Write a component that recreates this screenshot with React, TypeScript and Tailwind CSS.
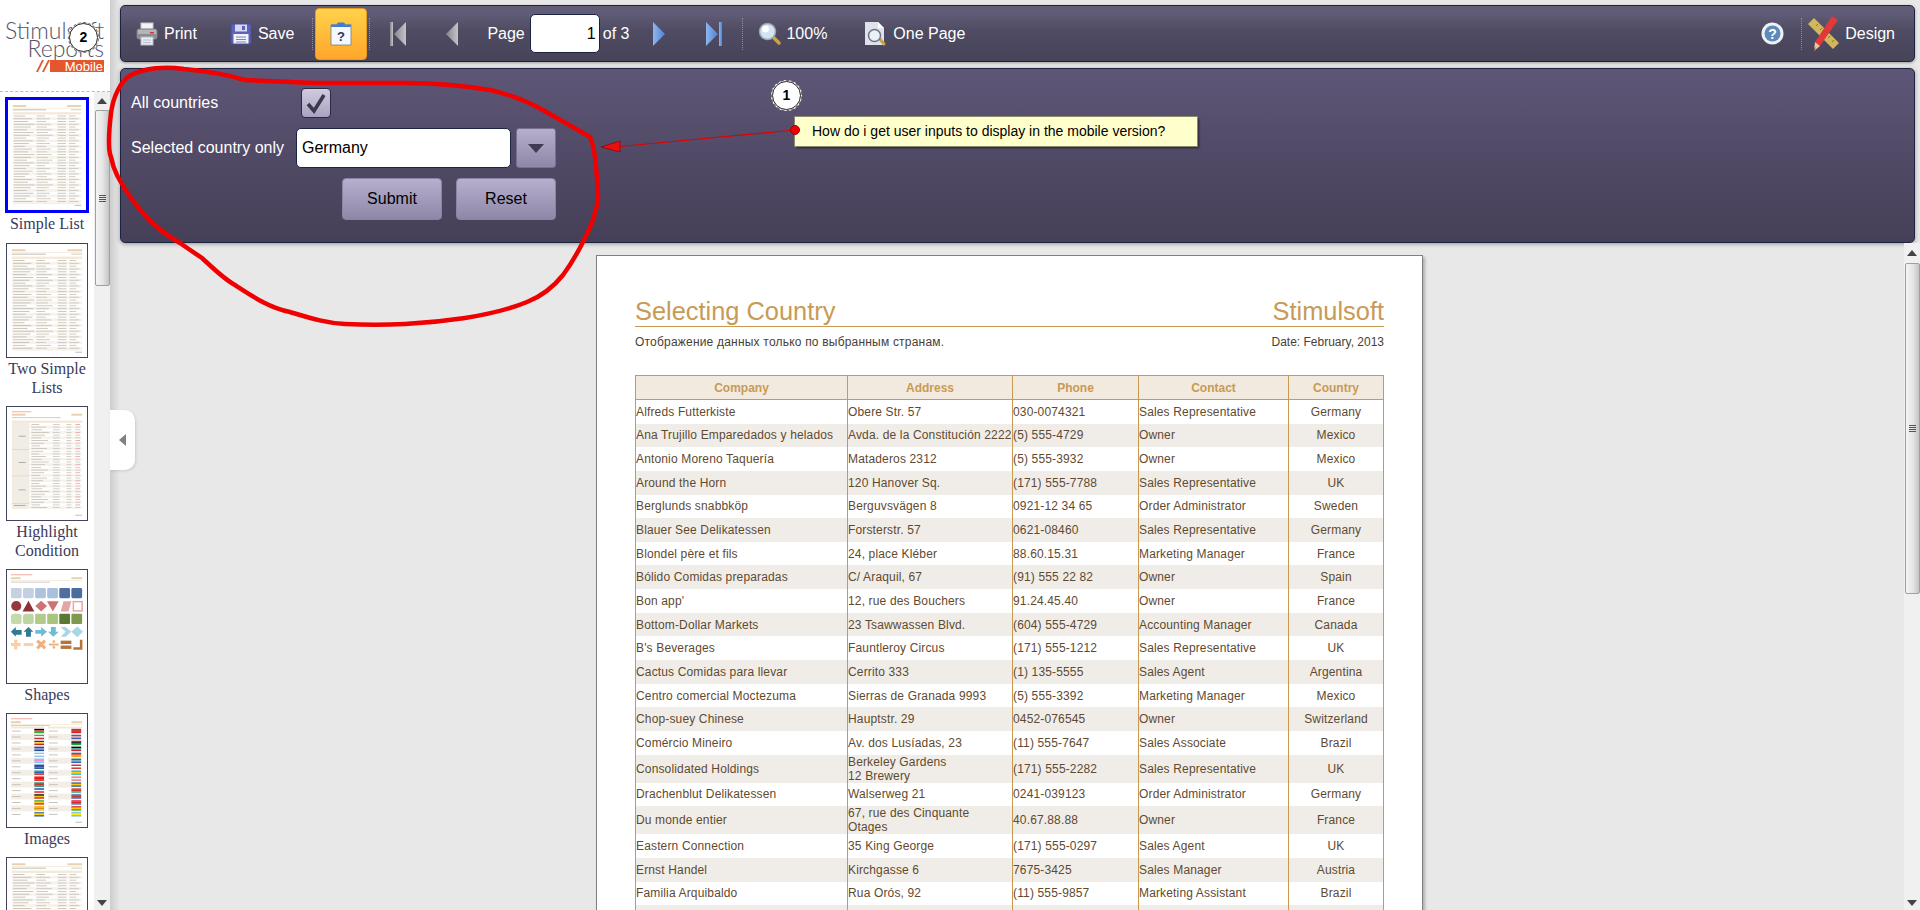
import React from 'react'

const SANS = "font-['Liberation_Sans',Arial,sans-serif]"

// ---- report data ----

const ROWS: string[][] = [
  ['Alfreds Futterkiste', 'Obere Str. 57', '030-0074321', 'Sales Representative', 'Germany'],
  ['Ana Trujillo Emparedados y helados', 'Avda. de la Constitución 2222', '(5) 555-4729', 'Owner', 'Mexico'],
  ['Antonio Moreno Taquería', 'Mataderos 2312', '(5) 555-3932', 'Owner', 'Mexico'],
  ['Around the Horn', '120 Hanover Sq.', '(171) 555-7788', 'Sales Representative', 'UK'],
  ['Berglunds snabbköp', 'Berguvsvägen 8', '0921-12 34 65', 'Order Administrator', 'Sweden'],
  ['Blauer See Delikatessen', 'Forsterstr. 57', '0621-08460', 'Sales Representative', 'Germany'],
  ['Blondel père et fils', '24, place Kléber', '88.60.15.31', 'Marketing Manager', 'France'],
  ['Bólido Comidas preparadas', 'C/ Araquil, 67', '(91) 555 22 82', 'Owner', 'Spain'],
  ["Bon app'", '12, rue des Bouchers', '91.24.45.40', 'Owner', 'France'],
  ['Bottom-Dollar Markets', '23 Tsawwassen Blvd.', '(604) 555-4729', 'Accounting Manager', 'Canada'],
  ["B's Beverages", 'Fauntleroy Circus', '(171) 555-1212', 'Sales Representative', 'UK'],
  ['Cactus Comidas para llevar', 'Cerrito 333', '(1) 135-5555', 'Sales Agent', 'Argentina'],
  ['Centro comercial Moctezuma', 'Sierras de Granada 9993', '(5) 555-3392', 'Marketing Manager', 'Mexico'],
  ['Chop-suey Chinese', 'Hauptstr. 29', '0452-076545', 'Owner', 'Switzerland'],
  ['Comércio Mineiro', 'Av. dos Lusíadas, 23', '(11) 555-7647', 'Sales Associate', 'Brazil'],
  ['Consolidated Holdings', 'Berkeley Gardens\n12 Brewery', '(171) 555-2282', 'Sales Representative', 'UK'],
  ['Drachenblut Delikatessen', 'Walserweg 21', '0241-039123', 'Order Administrator', 'Germany'],
  ['Du monde entier', '67, rue des Cinquante\nOtages', '40.67.88.88', 'Owner', 'France'],
  ['Eastern Connection', '35 King George', '(171) 555-0297', 'Sales Agent', 'UK'],
  ['Ernst Handel', 'Kirchgasse 6', '7675-3425', 'Sales Manager', 'Austria'],
  ['Familia Arquibaldo', 'Rua Orós, 92', '(11) 555-9857', 'Marketing Assistant', 'Brazil'],
  ['', '', '', '', ''],
]

const HEADERS = ['Company', 'Address', 'Phone', 'Contact', 'Country']

// ---- sidebar thumbnails ----

function ListThumb() {
  const rows = Array.from({ length: 32 }, (_, i) => i)
  return (
    <svg viewBox="0 0 82 115" className="h-full w-full blur-[0.4px]">
      <rect x="5" y="5" width="14" height="2" fill="#e8d2ae" />
      <rect x="62" y="5" width="15" height="2" fill="#e8d2ae" />
      <rect x="5" y="8" width="72" height="0.5" fill="#ecdcc2" />
      <rect x="5" y="9.5" width="35" height="1" fill="#bbb" />
      <rect x="66" y="9.5" width="11" height="1" fill="#ccc" />
      <rect x="5" y="12.5" width="72" height="2.4" fill="#f3e9da" />
      {rows.map((i) => (
        <g key={i}>
          {i % 2 === 1 && <rect x="5" y={15 + i * 2.9} width="72" height="2.9" fill="#f6f2ec" />}
          <rect x="6" y={16 + i * 2.9} width={12 + ((i * 7) % 11)} height="1" fill="#c9c3b7" />
          <rect x="30" y={16 + i * 2.9} width={9 + ((i * 5) % 9)} height="1" fill="#cfc9be" />
          <rect x="52" y={16 + i * 2.9} width="9" height="1" fill="#ccc6bb" />
          <rect x="64" y={16 + i * 2.9} width={7 + ((i * 3) % 6)} height="1" fill="#cfc9be" />
        </g>
      ))}
      <rect x="5" y="108" width="72" height="0.5" fill="#ecdcc2" />
      <rect x="70" y="110" width="7" height="1" fill="#bbb" />
    </svg>
  )
}

function HighlightThumb() {
  const rows = Array.from({ length: 32 }, (_, i) => i)
  return (
    <svg viewBox="0 0 82 115" className="h-full w-full blur-[0.4px]">
      <rect x="5" y="4" width="20" height="1" fill="#f0a9a0" />
      <rect x="5" y="6.5" width="14" height="2" fill="#e8d2ae" />
      <rect x="66" y="6.5" width="11" height="2" fill="#e8d2ae" />
      <rect x="5" y="10" width="50" height="1" fill="#ccc" />
      <rect x="5" y="13.5" width="72" height="2.4" fill="#f3e9da" />
      <rect x="5" y="16" width="18" height="88" fill="#f2ede4" />
      <rect x="5" y="43" width="18" height="0.5" fill="#d9c6a6" />
      <rect x="5" y="70" width="18" height="0.5" fill="#d9c6a6" />
      <rect x="5" y="98" width="18" height="0.5" fill="#d9c6a6" />
      <rect x="12" y="29" width="7" height="1" fill="#aaa" />
      <rect x="12" y="56" width="7" height="1" fill="#aaa" />
      <rect x="12" y="84" width="7" height="1" fill="#aaa" />
      <rect x="7" y="100" width="12" height="1" fill="#aaa" />
      {rows.map((i) => (
        <g key={i}>
          {i % 2 === 1 && <rect x="23" y={16 + i * 2.75} width="54" height="2.75" fill="#f6f3ed" />}
          <rect x="25" y={17 + i * 2.75} width={8 + ((i * 7) % 11)} height="0.9" fill="#c9c3b7" />
          <rect x="47" y={17 + i * 2.75} width={7 + ((i * 5) % 5)} height="0.9" fill="#cfc9be" />
          <rect x="61" y={17 + i * 2.75} width="5" height="0.9" fill="#cfc9be" />
          <rect x="70" y={17 + i * 2.75} width="5" height="0.9" fill={i % 3 === 0 ? '#eea6a6' : '#cfc9be'} />
        </g>
      ))}
      <rect x="70" y="110" width="7" height="1" fill="#bbb" />
    </svg>
  )
}

function ShapesThumb() {
  const blues = ['#c5d0e0', '#c2d0e2', '#aec2dc', '#a8c0dc', '#4e6f9f', '#4a6d9e']
  const greens = ['#c6d9ab', '#bdd5a6', '#b2cb8a', '#a9c47c', '#5a7a34', '#7f9a4f']
  return (
    <svg viewBox="0 0 82 115" className="h-full w-full blur-[0.25px]">
      <rect x="4" y="4" width="22" height="1" fill="#f0a9a0" />
      <rect x="4" y="7" width="10" height="2" fill="#e8d2ae" />
      <rect x="66" y="7" width="11" height="2" fill="#e8d2ae" />
      <rect x="4" y="10" width="73" height="0.5" fill="#ecdcc2" />
      <rect x="4" y="11.5" width="40" height="1" fill="#ccc" />
      {blues.map((c, i) => (
        <rect key={c + i} x={4 + i * 12.4} y="18" width="11" height="10.5" rx="1.5" fill={c} />
      ))}
      <circle cx="9.5" cy="36.5" r="5.2" fill="#943a3c" />
      <polygon points="16,42 28,42 22,31" fill="#8c3236" />
      <polygon points="35,31 41,36.5 35,42 29,36.5" fill="#cc7377" />
      <polygon points="41,31.5 53,31.5 47,42" fill="#cc7377" />
      <polygon points="55,42 58,31.5 66,31.5 63,42" fill="#e3a5a7" />
      <rect x="68" y="32" width="9" height="9.5" fill="#fff" stroke="#e3a5a7" strokeWidth="1.5" />
      {greens.map((c, i) => (
        <rect key={c + i} x={4 + i * 12.4} y="44.5" width="11" height="10.5" rx={i < 2 ? 3 : 1} fill={c} />
      ))}
      <polygon points="4,63 9,58 9,61 15,61 15,66 9,66 9,68 4,63" fill="#2f7a94" />
      <polygon points="22,58 27,63 24.5,63 24.5,68 19.5,68 19.5,63 17,63" fill="#2f7a94" />
      <polygon points="29,61 35,61 35,58 41,63 35,68 35,65 29,65" fill="#6fbcd8" />
      <polygon points="45,58 50,58 50,63 53,63 47.5,68 42,63 45,63" fill="#6fbcd8" />
      <polygon points="55,58 60,58 66,63 60,68 55,68 60,63" fill="#a7d6e6" />
      <polygon points="72,57.5 78,63 72,68.5 66,63" fill="#a7d6e6" />
      <path d="M9 71v10M4 76h10" stroke="#f9cfa6" strokeWidth="3.2" />
      <rect x="17" y="74.5" width="10" height="3" fill="#f9cfa6" />
      <path d="M31 72l8 8M39 72l-8 8" stroke="#f2b07a" strokeWidth="3.2" />
      <path d="M43 76h10" stroke="#f2b07a" strokeWidth="2" />
      <circle cx="48" cy="73" r="1.4" fill="#f2b07a" />
      <circle cx="48" cy="79" r="1.4" fill="#f2b07a" />
      <rect x="55" y="72" width="11" height="3.5" fill="#b5753a" />
      <rect x="55" y="77" width="11" height="3.5" fill="#b5753a" />
      <path d="M76 71v9h-8" stroke="#b5753a" strokeWidth="2.6" fill="none" />
    </svg>
  )
}

const FLAGS = [
  ['#000', '#c33', '#3a3'], ['#3a7', '#fff', '#c33'], ['#13a', '#fc0', '#c22'], ['#2a4a9a', '#7a92c8', '#2a4a9a'],
  ['#8cc4ee', '#fff', '#8cc4ee'], ['#8cc4ee', '#e8d', '#8cc4ee'], ['#2a4a9a', '#35a', '#2a4a9a'], ['#1a9', '#36a', '#c33'],
  ['#e11', '#e11', '#e11'], ['#186', '#c33', '#186'], ['#13a', '#fff', '#d22'], ['#000', '#fc0', '#d22'], ['#2a3', '#fc0', '#d22'],
  ['#fa0', '#c90', '#eb4'], ['#36a', '#fc0', '#36a'],
]
const FLAGS_RIGHT = [
  ['#d22', '#a11', '#d22'], ['#36a', '#e9a', '#36a'], ['#d22', '#000', '#2a3'], ['#000', '#3ab', '#d22'],
  ['#36a', '#d54', '#fa0'], ['#36a', '#7ac', '#36a'], ['#c33', '#fff', '#c33'], ['#3bc', '#fc0', '#3bc'], ['#e77', '#eee', '#e77'],
  ['#36a', '#fc0', '#36a'], ['#c33', '#c33', '#3a5'], ['#36a', '#c33', '#36a'], ['#d23', '#d23', '#37a'], ['#d22', '#fc0', '#3a3'], ['#7bd', '#fe0', '#7bd'],
]

function ImagesThumb() {
  const column = (flags: string[][], x: number) =>
    flags.map((f, i) => {
      const y = 14 + i * 6.1
      return (
        <g key={i}>
          {i % 2 === 1 && <rect x={x} y={y} width="34" height="6.1" fill="#f3efe8" />}
          <rect x={x + 1} y={y + 2.6} width="9" height="1" fill="#c9c3b7" />
          {f.map((c, j) => (
            <rect key={j} x={x + 24} y={y + 0.8 + j * 1.5} width="10" height="1.5" fill={c} />
          ))}
        </g>
      )
    })
  return (
    <svg viewBox="0 0 82 115" className="h-full w-full blur-[0.25px]">
      <rect x="4" y="4" width="22" height="1" fill="#f0a9a0" />
      <rect x="4" y="7" width="10" height="2" fill="#e8d2ae" />
      <rect x="66" y="7" width="11" height="2" fill="#e8d2ae" />
      <rect x="4" y="10" width="73" height="0.5" fill="#ecdcc2" />
      <rect x="4" y="11" width="40" height="1" fill="#ccc" />
      <rect x="4" y="12.5" width="34" height="2" fill="#f3e9da" />
      <rect x="42" y="12.5" width="35" height="2" fill="#f3e9da" />
      {column(FLAGS, 4)}
      {column(FLAGS_RIGHT, 42)}
      <rect x="70" y="110" width="7" height="1" fill="#bbb" />
    </svg>
  )
}

function Thumb({ label, active, children }: { label?: React.ReactNode; active?: boolean; children: React.ReactNode }) {
  return (
    <div className={active ? 'mb-[10px] flex flex-col items-center' : 'mb-[9px] flex flex-col items-center'}>
      <div
        className={
          active
            ? 'h-[116px] w-[84px] border-[3px] border-[#0000ff] bg-white'
            : 'h-[115px] w-[82px] border border-[#44435c] bg-white'
        }
      >
        {children}
      </div>
      {label && (
        <div className="mt-px w-[90px] text-center font-['Liberation_Serif',serif] text-[16px] leading-[19px] text-[#3a3a5c]">
          {label}
        </div>
      )}
    </div>
  )
}

function ScrollArrow({ up }: { up?: boolean }) {
  return (
    <svg width="10" height="6" viewBox="0 0 10 6">
      <polygon points={up ? '5,0 10,6 0,6' : '0,0 10,0 5,6'} fill="#444" />
    </svg>
  )
}

function Grip() {
  return (
    <div className="flex flex-col gap-px">
      <div className="h-px w-[7px] bg-[#555]" />
      <div className="h-px w-[7px] bg-[#555]" />
      <div className="h-px w-[7px] bg-[#555]" />
      <div className="h-px w-[7px] bg-[#555]" />
    </div>
  )
}

function Sidebar() {
  return (
    <aside className="relative flex h-[910px] w-[110px] shrink-0 flex-col bg-white">
      <div className="relative h-[92px] shrink-0 border-b border-dashed border-[#bbb] pr-[6px] pt-[21px] text-right font-['Lato',sans-serif] text-[23px] font-light leading-[18px] text-[#55556a]">
        <div>Stimulsoft</div>
        <div>Reports</div>
        <div className="mt-[3px] flex justify-end">
          <svg width="14" height="12" viewBox="0 0 14 12">
            <polygon points="0,12 6,0 8,0 2,12" fill="#e4572e" />
            <polygon points="6,12 12,0 14,0 8,12" fill="#e4572e" />
          </svg>
          <div className="h-[12px] w-[54px] bg-[#e4572e] pr-px text-right font-['Liberation_Sans',sans-serif] text-[13px] font-normal leading-[13px] text-white">
            Mobile
          </div>
        </div>
      </div>
      <div className="flex min-h-0 flex-1">
        <div className="min-w-0 flex-1 overflow-hidden pt-[5px]">
          <Thumb label="Simple List" active>
            <ListThumb />
          </Thumb>
          <Thumb label={<>Two Simple<br />Lists</>}>
            <ListThumb />
          </Thumb>
          <Thumb label={<>Highlight<br />Condition</>}>
            <HighlightThumb />
          </Thumb>
          <Thumb label="Shapes">
            <ShapesThumb />
          </Thumb>
          <Thumb label="Images">
            <ImagesThumb />
          </Thumb>
          <Thumb>
            <ListThumb />
          </Thumb>
        </div>
        <div className="flex w-[16px] shrink-0 flex-col items-center bg-[#f0f0f0]">
          <div className="flex h-[18px] items-center"><ScrollArrow up /></div>
          <div className="flex h-[176px] w-[15px] items-center justify-center rounded-[2px] border border-[#a0a0a0] bg-[linear-gradient(to_right,#f4f4f4,#e6e6e6_50%,#c4c4c4)]">
            <Grip />
          </div>
          <div className="flex-1" />
          <div className="flex h-[14px] items-center"><ScrollArrow /></div>
        </div>
      </div>
    </aside>
  )
}

// ---- toolbar icons ----

function PrinterIcon() {
  return (
    <svg width="22" height="24" viewBox="0 0 22 24">
      <rect x="5" y="1" width="12" height="8" fill="#f4f4f4" stroke="#c8c8c8" />
      <rect x="1" y="7" width="20" height="10" rx="2" fill="#b5b5b8" stroke="#7b7b80" />
      <rect x="1.5" y="12" width="19" height="4" fill="#8b8b90" />
      <rect x="14" y="10" width="4" height="1.4" fill="#d03030" />
      <rect x="5" y="15" width="12" height="8" fill="#e8eef6" stroke="#b8bcc4" />
      <path d="M7 18h8M7 20.5h8" stroke="#b4bccb" />
    </svg>
  )
}

function SaveIcon() {
  return (
    <svg width="22" height="22" viewBox="0 0 22 22">
      <rect x="1" y="1" width="20" height="20" rx="1" fill="#5f63b8" stroke="#4a4c99" />
      <rect x="5" y="1.5" width="12" height="7" fill="#d4d8f2" />
      <rect x="12" y="3" width="3" height="4" fill="#5f63b8" />
      <rect x="3.5" y="11" width="15" height="9.5" fill="#f2f4fb" />
      <path d="M6 14h10M6 16.5h10M6 19h10" stroke="#7a80c4" />
    </svg>
  )
}

function ClipboardIcon() {
  return (
    <svg width="22" height="24" viewBox="0 0 22 24">
      <rect x="1" y="3" width="20" height="20" fill="#fff" stroke="#8a8a8a" />
      <rect x="2" y="5" width="18" height="17" fill="#f4f7fb" />
      <rect x="1" y="2.5" width="20" height="2.5" rx="1" fill="#3f7fd0" />
      <rect x="7" y="0.5" width="8" height="3" rx="1.5" fill="#3f7fd0" />
      <text x="11" y="19" textAnchor="middle" className="font-['Liberation_Sans',sans-serif]" fontSize="13" fontWeight="700" fill="#32325a">?</text>
    </svg>
  )
}

function NavIcon({ dir, bar, blue }: { dir: 'left' | 'right'; bar?: boolean; blue?: boolean }) {
  const fill = blue ? 'url(#navBlue)' : 'url(#navGrey)'
  const w = bar ? 16 : 12
  const triangle = dir === 'left' ? `${w},0 ${w},24 ${w - 12},12` : `0,0 0,24 12,12`
  return (
    <svg width={w} height="24" viewBox={`0 0 ${w} 24`}>
      <polygon points={triangle} fill={fill} />
      {bar && <rect x={dir === 'left' ? 0 : 13} y="0" width="3" height="24" fill={fill} />}
    </svg>
  )
}

function ZoomIcon() {
  return (
    <svg width="24" height="24" viewBox="0 0 24 24">
      <path d="M14 14l7 7" stroke="#c9a24a" strokeWidth="3.5" strokeLinecap="round" />
      <circle cx="9.5" cy="9.5" r="8" fill="#d3e3f2" stroke="#9aa4b2" strokeWidth="1.5" />
      <circle cx="7.5" cy="7" r="3.5" fill="#fff" />
    </svg>
  )
}

function OnePageIcon() {
  return (
    <svg width="23" height="26" viewBox="0 0 23 26">
      <polygon points="1,1 14,1 20,7 20,24 1,24" fill="#dfe2ea" />
      <polygon points="14,1 20,7 14,7" fill="#fff" />
      <path d="M15 17l5 6" stroke="#c9a24a" strokeWidth="3" strokeLinecap="round" />
      <circle cx="10.5" cy="14.5" r="6" fill="#eaf1f8" stroke="#6d7480" strokeWidth="1.5" />
    </svg>
  )
}

function HelpIcon() {
  return (
    <svg width="23" height="23" viewBox="0 0 23 23">
      <circle cx="11.5" cy="11.5" r="11" fill="#eef2f7" />
      <circle cx="11.5" cy="11.5" r="8" fill="#5d8ab8" />
      <text x="11.5" y="16.5" textAnchor="middle" className="font-['Liberation_Sans',sans-serif]" fontSize="14" fontWeight="700" fill="#fff">?</text>
    </svg>
  )
}

function DesignIcon() {
  return (
    <svg width="32" height="36" viewBox="0 0 32 36">
      <polygon points="0,8 6,2 31,27 25,33" fill="#d2b65a" />
      <path d="M8 10l2-2M12 14l2-2M16 18l2-2M20 22l2-2M24 26l2-2" stroke="#8c7430" />
      <polygon points="24,0 30,4 12,30 7,26" fill="#e0393c" />
      <polygon points="7,26 12,30 6,35" fill="#eec49a" />
      <polygon points="6,33 8,31 6,35" fill="#444" />
    </svg>
  )
}

function DottedSep({ className }: { className: string }) {
  return <div className={`h-[32px] w-0 border-l border-dotted border-[#8d8aa0] ${className}`} />
}

function Toolbar() {
  return (
    <div className="flex h-[57px] items-center rounded-[5px] border border-[#1c2340] bg-[linear-gradient(to_bottom,#625d79,#605b76_15%,#4e4b62_45%,#47445a)] pl-[15px] pr-[19px] text-[16px] text-white shadow-[0_1px_3px_rgba(0,0,0,0.35)]">
      <PrinterIcon />
      <span className="ml-[6px]">Print</span>
      <div className="ml-[33px]"><SaveIcon /></div>
      <span className="ml-[6px]">Save</span>
      <DottedSep className="ml-[18px]" />
      <div className="ml-[2px] flex h-[52px] w-[52px] items-center justify-center rounded-[4px] border border-[#e89a1c] bg-[linear-gradient(to_bottom,#ffd24a,#ffa62b)]">
        <ClipboardIcon />
      </div>
      <DottedSep className="ml-[2px]" />
      <div className="ml-[20px]"><NavIcon dir="left" bar /></div>
      <div className="ml-[40px]"><NavIcon dir="left" /></div>
      <span className="ml-[29px]">Page</span>
      <div className="ml-[5px] flex h-[39px] w-[70px] items-center justify-end rounded-[5px] border border-[#1c2340] bg-white pr-[3px] text-black">1</div>
      <span className="ml-[3px]">of 3</span>
      <div className="ml-[24px]"><NavIcon dir="right" blue /></div>
      <div className="ml-[41px]"><NavIcon dir="right" bar blue /></div>
      <DottedSep className="ml-[20px]" />
      <div className="ml-[15px]"><ZoomIcon /></div>
      <span className="ml-[4px]">100%</span>
      <div className="ml-[37px]"><OnePageIcon /></div>
      <span className="ml-[6px]">One Page</span>
      <div className="ml-auto"><HelpIcon /></div>
      <DottedSep className="ml-[17px]" />
      <div className="ml-[6px]"><DesignIcon /></div>
      <span className="ml-[5px]">Design</span>
    </div>
  )
}

function ParamButton({ label }: { label: string }) {
  return (
    <button className="h-[42px] w-[100px] rounded-[4px] border border-[#8b84a3] bg-[linear-gradient(to_bottom,#b6afcd,#8e87a7)] text-[16px] text-black">
      {label}
    </button>
  )
}

function ParamsPanel() {
  return (
    <div className="mt-[6px] h-[175px] rounded-[5px] border border-[#1b2442] bg-[linear-gradient(to_bottom,#5e5676,#453f57)] text-[16px] text-white shadow-[0_1px_4px_rgba(0,0,0,0.35)]">
      <div className="grid w-[450px] grid-cols-[160px_215px_40px] items-center gap-x-[5px] pl-[10px] pt-[19px]">
        <span>All countries</span>
        <div className="col-span-2 ml-[5px] flex h-[30px] w-[30px] items-center justify-center rounded-[4px] border border-[#2d2a40] bg-[linear-gradient(to_bottom,#d0cbe0,#a9a3c0)]">
          <svg width="24" height="24" viewBox="0 0 24 24">
            <path d="M4 13l6 7L20 4" fill="none" stroke="#3c3850" strokeWidth="3.6" />
          </svg>
        </div>
        <span className="mt-[10px]">Selected country only</span>
        <div className="mt-[10px] flex h-[40px] items-center rounded-[5px] border border-[#1b2442] bg-white pl-[5px] text-black">Germany</div>
        <div className="mt-[10px] flex h-[40px] w-[40px] items-center justify-center rounded-[3px] border border-[#77708f] bg-[linear-gradient(to_bottom,#b6afcd,#8e87a7)]">
          <svg width="16" height="9" viewBox="0 0 16 9">
            <polygon points="0,0 16,0 8,9" fill="#3f3b52" />
          </svg>
        </div>
      </div>
      <div className="mt-[10px] flex w-[435px] justify-end gap-[14px]">
        <ParamButton label="Submit" />
        <ParamButton label="Reset" />
      </div>
    </div>
  )
}

// ---- report page ----

function ReportPage() {
  return (
    <div className="ml-[486px] w-[827px] shrink-0 border border-[#808080] bg-white pl-[38px] pr-[38px] pt-[41px] shadow-[2px_2px_3px_rgba(0,0,0,0.25)]">
      <div className="flex h-[30px] items-start justify-between border-b border-[#c8994f] text-[25.4px] leading-[29px] text-[#c89a55]">
        <span>Selecting Country</span>
        <span>Stimulsoft</span>
      </div>
      <div className="mt-[6px] flex h-[18px] items-center justify-between text-[12px] text-[#4a3f33]">
        <span className="tracking-[0.2px]">Отображение данных только по выбранным странам.</span>
        <span>Date: February, 2013</span>
      </div>
      <div className="mt-[24px] border-r border-t border-[#c8994f]">
        <div className="grid h-[24px] grid-cols-[212px_165px_126px_150px_1fr] border-b border-[#c8994f] bg-[#f2eadf] text-[12px] font-bold text-[#c89a55]">
          {HEADERS.map((h) => (
            <div key={h} className="flex items-center justify-center border-l border-[#c8994f]">{h}</div>
          ))}
        </div>
        {ROWS.map((row, i) => (
          <div
            key={i}
            className={`grid grid-cols-[212px_165px_126px_150px_1fr] text-[12px] leading-[14px] tracking-[0.15px] text-[#5f4a30] ${
              row[1].includes('\n') ? 'h-[28px]' : 'h-[23.65px]'
            } ${i % 2 === 1 ? 'bg-[#f0ede8]' : 'bg-white'}`}
          >
            {row.map((cell, j) => (
              <div
                key={j}
                className={`flex items-center whitespace-pre border-l border-[#c8994f] ${
                  j === 4 ? 'justify-center' : ''
                }`}
              >
                {cell}
              </div>
            ))}
          </div>
        ))}
      </div>
    </div>
  )
}

function PageScrollbar() {
  return (
    <div className="ml-auto flex w-[16px] shrink-0 flex-col items-center bg-[#f0f0f0]">
      <div className="flex h-[20px] items-center"><ScrollArrow up /></div>
      <div className="flex h-[331px] w-[15px] items-center justify-center rounded-[2px] border border-[#a0a0a0] bg-[linear-gradient(to_right,#f4f4f4,#e6e6e6_50%,#c4c4c4)]">
        <Grip />
      </div>
      <div className="flex-1" />
      <div className="flex h-[14px] items-center"><ScrollArrow /></div>
    </div>
  )
}

function NumberBubble({ n, className }: { n: string; className: string }) {
  return (
    <div className={`absolute flex h-[31px] w-[31px] items-center justify-center rounded-full border border-dashed border-[#777] bg-white text-[14px] font-bold text-black outline-1 outline-[#222] -outline-offset-2 ${className}`}>
      {n}
    </div>
  )
}

export default function App() {
  return (
    <div className={`relative flex h-[910px] w-[1920px] overflow-hidden bg-[#e8e8e8] ${SANS}`}>
      <svg width="0" height="0" className="absolute">
        <defs>
          <linearGradient id="navGrey" x1="0" y1="0" x2="1" y2="0">
            <stop offset="0" stopColor="#85858c" />
            <stop offset="1" stopColor="#c4c4c8" />
          </linearGradient>
          <linearGradient id="navBlue" x1="0" y1="0" x2="1" y2="0">
            <stop offset="0" stopColor="#8fb5ec" />
            <stop offset="1" stopColor="#4e83d8" />
          </linearGradient>
        </defs>
      </svg>

      <Sidebar />

      <main className="relative flex min-w-0 flex-1 flex-col bg-[linear-gradient(to_right,#cdcdcd,#e8e8e8_10px)] pt-[5px]">
        <div className="ml-[10px] mr-[5px]">
          <Toolbar />
          <ParamsPanel />
        </div>
        <div className="flex min-h-0 flex-1 overflow-hidden">
          <div className="mt-[12px] flex-1 overflow-hidden">
            <ReportPage />
          </div>
          <PageScrollbar />
        </div>

        {/* collapse tab */}
        <div className="absolute left-0 top-[410px] flex h-[60px] w-[25px] items-center justify-center rounded-r-[10px] bg-white shadow-[1px_1px_3px_rgba(0,0,0,0.12)]">
          <svg width="7" height="12" viewBox="0 0 7 12">
            <polygon points="7,0 7,12 0,6" fill="#808080" />
          </svg>
        </div>
      </main>

      {/* annotations drawn on top of the screenshot */}
      <svg width="1920" height="910" viewBox="0 0 1920 910" className="pointer-events-none absolute left-0 top-0">
        <path
          d="M184 69 C165 66 145 68 131 75 C120 81 113 98 111 113 C109 130 108 150 111 157 C113 168 116 173 118 177 C126 192 134 203 143 213 C155 228 170 237 180 243 C190 250 196 254 202 258 C215 270 224 279 235 285 C255 298 270 308 290 312 C310 318 325 323 345 324 C365 325 385 325 405 324 C425 323 445 321 465 318 C490 314 510 309 527 302 C545 295 555 285 563 275 C572 263 578 252 584 240 C592 225 596 212 598 200 C598 188 597 178 596 167 C595 155 594 145 590 137 C575 128 558 119 543 110 C525 100 508 94 490 90 C465 86 435 83 408 83 C380 83 355 83 327 83 C300 83 270 81 245 80 C225 74 205 71 184 69 Z"
          fill="none"
          stroke="#f00000"
          strokeWidth="4.5"
          strokeLinejoin="round"
        />
        <line x1="795" y1="130" x2="620" y2="146.5" stroke="#e00000" strokeWidth="1.2" />
        <polygon points="601,147 620,141 620,152" fill="#e81010" stroke="#a00000" strokeWidth="0.8" />
      </svg>
      <NumberBubble n="2" className="left-[68px] top-[22px]" />
      <NumberBubble n="1" className="left-[771px] top-[80px]" />
      <div className="absolute left-[795px] top-[117px] flex h-[29px] w-[402px] items-center bg-[#ffffcc] pl-[17px] text-[14px] text-black shadow-[2px_2px_2px_rgba(0,0,0,0.55)] outline-1 outline-[#8a8a70]">
        How do i get user inputs to display in the mobile version?
      </div>
      <div className="absolute left-[790px] top-[125px] h-[10px] w-[10px] rounded-full border border-[#900] bg-[#f00000]" />
    </div>
  )
}
